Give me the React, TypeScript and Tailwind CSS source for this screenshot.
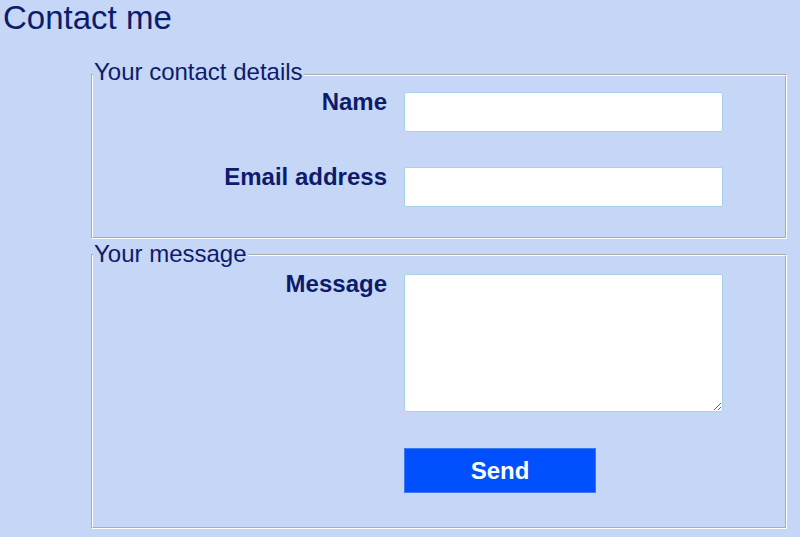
import React from "react";

const font = { fontFamily: '"Liberation Sans", Arial, sans-serif' };

function Row({
  label,
  children,
  className = "",
}: {
  label: string;
  children: React.ReactNode;
  className?: string;
}) {
  return (
    <div className={"flex items-start " + className}>
      <label className="-mt-[4px] w-[294px] shrink-0 text-right text-[24px] leading-[28px] font-bold text-[#0d1b6b]">
        {label}
      </label>
      <div className="ml-[17px]">{children}</div>
    </div>
  );
}

export default function App() {
  return (
    <div
      className="min-h-[537px] w-[800px] overflow-hidden bg-[#c6d6f7] text-[#0d1b6b]"
      style={font}
    >
      <h1 className="pl-[3px] pt-0 text-[33px] leading-[36px] font-normal">
        Contact me
      </h1>

      <form className="ml-[91px] mt-[22px] w-[696px]">
        {/* contact details */}
        <fieldset className="border-2 border-white [border-style:groove] px-0 pb-[30px]">
          <legend className="ml-0 px-[1px] pb-[5px] text-[24px] leading-[28px]">
            Your contact details
          </legend>
          <Row label="Name" className="mt-[1px]">
            <input
              type="text"
              className="block h-[40px] w-[319px] rounded-[2px] border border-[#a9cfe9] bg-white"
            />
          </Row>
          <Row label="Email address" className="mt-[35px]">
            <input
              type="text"
              className="block h-[40px] w-[319px] rounded-[2px] border border-[#a9cfe9] bg-white"
            />
          </Row>
        </fieldset>

        {/* message */}
        <fieldset className="mt-[1px] border-2 border-white [border-style:groove] px-0 pb-[34px]">
          <legend className="ml-0 px-[1px] pb-[2px] text-[24px] leading-[28px]">
            Your message
          </legend>
          <Row label="Message" className="mt-[4px]">
            <textarea className="block h-[138px] w-[319px] rounded-[2px] border border-[#a9cfe9] bg-white" />
          </Row>
          <div className="ml-[311px] mt-[36px]">
            <button
              type="button"
              className="h-[45px] w-[192px] border border-[#3a78f0] bg-[#0050ff] text-[24px] font-bold text-white"
            >
              Send
            </button>
          </div>
        </fieldset>
      </form>
    </div>
  );
}
